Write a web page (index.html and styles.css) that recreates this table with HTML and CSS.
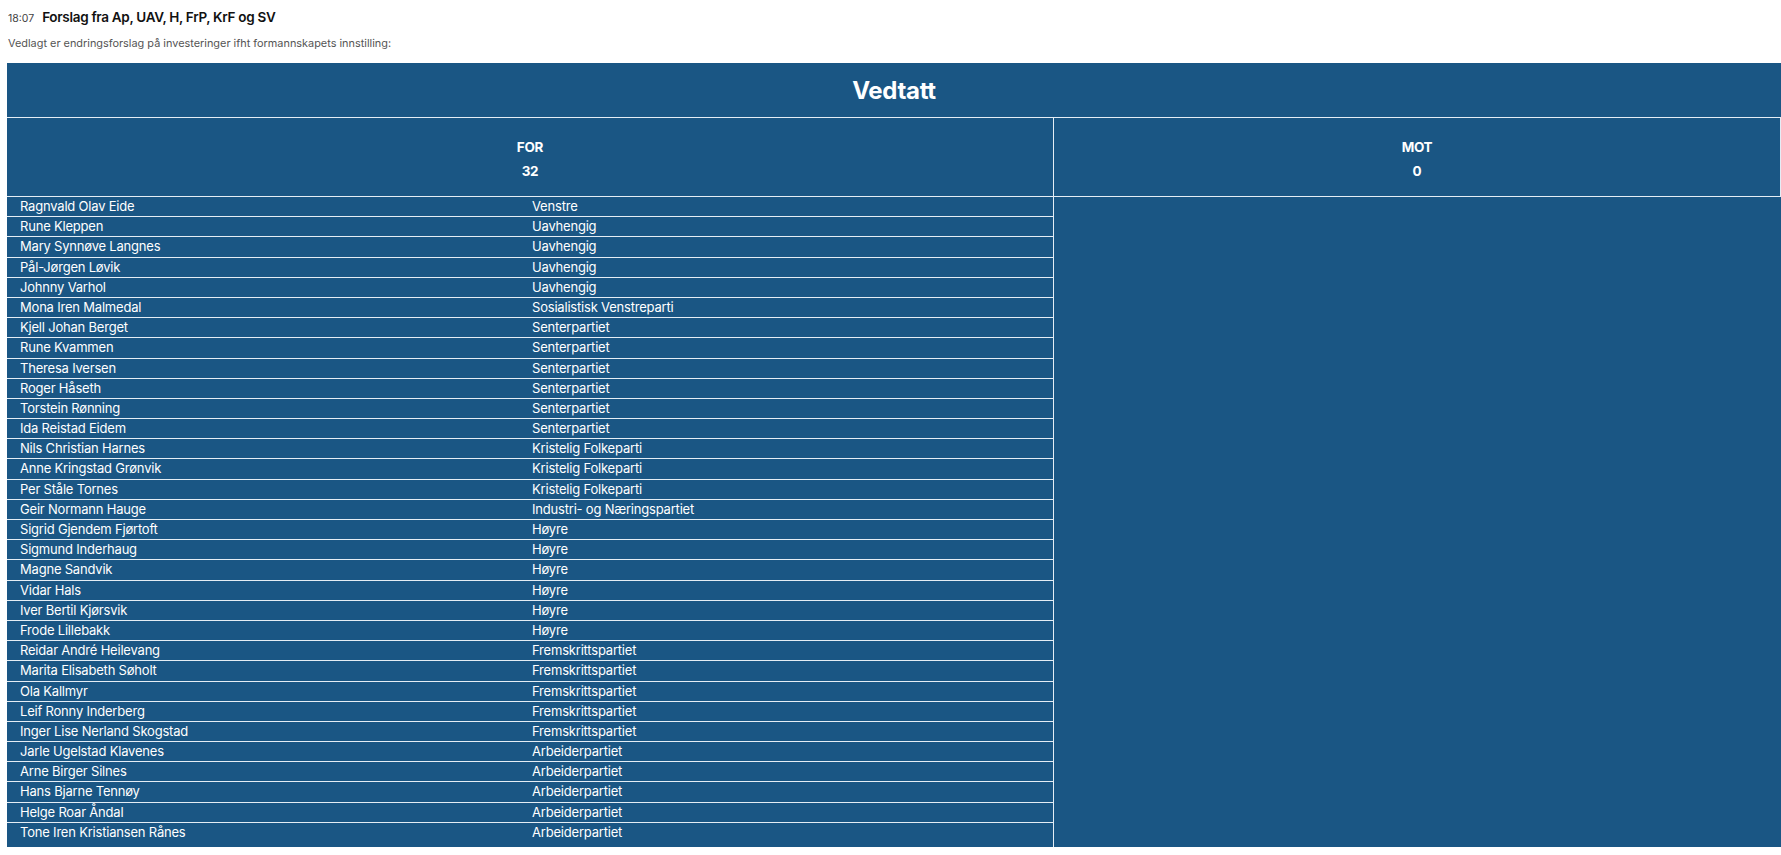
FILE: index.html
```html
<!DOCTYPE html>
<html lang="no">
<head>
<meta charset="utf-8">
<title>Votering</title>
<link rel="stylesheet" href="styles.css">
</head>
<body>
<div class="page">
  <div class="item-head">
    <span class="time">18:07</span>
    <span class="item-title">Forslag fra Ap, UAV, H, FrP, KrF og SV</span>
  </div>
  <p class="item-desc">Vedlagt er endringsforslag på investeringer ifht formannskapets innstilling:</p>

  <div class="vote">
    <div class="vote-result">Vedtatt</div>
    <div class="vote-cols">
      <div class="col col-for">
        <div class="col-head">
          <span>FOR</span>
          <span>32</span>
        </div>
        <div class="rows">
          <div class="row"><span class="name">Ragnvald Olav Eide</span><span class="party">Venstre</span></div>
          <div class="row"><span class="name">Rune Kleppen</span><span class="party">Uavhengig</span></div>
          <div class="row"><span class="name">Mary Synnøve Langnes</span><span class="party">Uavhengig</span></div>
          <div class="row"><span class="name">Pål-Jørgen Løvik</span><span class="party">Uavhengig</span></div>
          <div class="row"><span class="name">Johnny Varhol</span><span class="party">Uavhengig</span></div>
          <div class="row"><span class="name">Mona Iren Malmedal</span><span class="party">Sosialistisk Venstreparti</span></div>
          <div class="row"><span class="name">Kjell Johan Berget</span><span class="party">Senterpartiet</span></div>
          <div class="row"><span class="name">Rune Kvammen</span><span class="party">Senterpartiet</span></div>
          <div class="row"><span class="name">Theresa Iversen</span><span class="party">Senterpartiet</span></div>
          <div class="row"><span class="name">Roger Håseth</span><span class="party">Senterpartiet</span></div>
          <div class="row"><span class="name">Torstein Rønning</span><span class="party">Senterpartiet</span></div>
          <div class="row"><span class="name">Ida Reistad Eidem</span><span class="party">Senterpartiet</span></div>
          <div class="row"><span class="name">Nils Christian Harnes</span><span class="party">Kristelig Folkeparti</span></div>
          <div class="row"><span class="name">Anne Kringstad Grønvik</span><span class="party">Kristelig Folkeparti</span></div>
          <div class="row"><span class="name">Per Ståle Tornes</span><span class="party">Kristelig Folkeparti</span></div>
          <div class="row"><span class="name">Geir Normann Hauge</span><span class="party">Industri- og Næringspartiet</span></div>
          <div class="row"><span class="name">Sigrid Gjendem Fjørtoft</span><span class="party">Høyre</span></div>
          <div class="row"><span class="name">Sigmund Inderhaug</span><span class="party">Høyre</span></div>
          <div class="row"><span class="name">Magne Sandvik</span><span class="party">Høyre</span></div>
          <div class="row"><span class="name">Vidar Hals</span><span class="party">Høyre</span></div>
          <div class="row"><span class="name">Iver Bertil Kjørsvik</span><span class="party">Høyre</span></div>
          <div class="row"><span class="name">Frode Lillebakk</span><span class="party">Høyre</span></div>
          <div class="row"><span class="name">Reidar André Heilevang</span><span class="party">Fremskrittspartiet</span></div>
          <div class="row"><span class="name">Marita Elisabeth Søholt</span><span class="party">Fremskrittspartiet</span></div>
          <div class="row"><span class="name">Ola Kallmyr</span><span class="party">Fremskrittspartiet</span></div>
          <div class="row"><span class="name">Leif Ronny Inderberg</span><span class="party">Fremskrittspartiet</span></div>
          <div class="row"><span class="name">Inger Lise Nerland Skogstad</span><span class="party">Fremskrittspartiet</span></div>
          <div class="row"><span class="name">Jarle Ugelstad Klavenes</span><span class="party">Arbeiderpartiet</span></div>
          <div class="row"><span class="name">Arne Birger Silnes</span><span class="party">Arbeiderpartiet</span></div>
          <div class="row"><span class="name">Hans Bjarne Tennøy</span><span class="party">Arbeiderpartiet</span></div>
          <div class="row"><span class="name">Helge Roar Åndal</span><span class="party">Arbeiderpartiet</span></div>
          <div class="row"><span class="name">Tone Iren Kristiansen Rånes</span><span class="party">Arbeiderpartiet</span></div>
        </div>
      </div>
      <div class="col col-mot">
        <div class="col-head col-head-last">
          <span>MOT</span>
          <span>0</span>
        </div>
      </div>
    </div>
  </div>
</div>
</body>
</html>
```

FILE: styles.css
```css
html, body {
  margin: 0;
  padding: 0;
  background: #ffffff;
}

body {
  font-family: Inter, "Noto Sans", "Liberation Sans", sans-serif;
  color: #1b1b1b;
}

.page {
  padding: 9px 0 0 7px;
}

.item-head {
  display: flex;
  align-items: baseline;
  gap: 8px;
  padding-left: 1px;
  height: 18px;
}

.time {
  font-size: 10.5px;
  color: #444;
}

.item-title {
  font-size: 13.5px;
  font-weight: 600;
  color: #111;
  letter-spacing: -0.3px;
}

.item-desc {
  margin: 9px 0 0 1px;
  font-size: 10.9px;
  color: #555;
  height: 14px;
  line-height: 14px;
}

.vote {
  margin-top: 13px;
  width: 1774px;
  background: #1a5684;
  color: #ffffff;
}

.vote-result {
  height: 54px;
  display: flex;
  align-items: center;
  justify-content: center;
  font-size: 24px;
  font-weight: 700;
  letter-spacing: -0.3px;
  border-bottom: 1px solid #e4edf5;
}

.vote-cols {
  display: grid;
  grid-template-columns: 1047px 1fr;
}

.col-for {
  border-right: 1px solid #e4edf5;
}

.col-head {
  height: 79px;
  display: flex;
  flex-direction: column;
  align-items: center;
  justify-content: center;
  gap: 8px;
  font-size: 13.5px;
  font-weight: 700;
  letter-spacing: -0.3px;
  border-bottom: 1px solid #e4edf5;
  padding-top: 3px;
  box-sizing: border-box;
}

.col-head-last {
  border-right: 1px solid #e4edf5;
}

.rows {
  padding-bottom: 4px;
}

.row {
  display: grid;
  grid-template-columns: 525px 1fr;
  height: 20.2px;
  line-height: 19px;
  font-size: 13px;
  letter-spacing: -0.2px;
  border-bottom: 1px solid #e4edf5;
  box-sizing: border-box;
}

.row:last-child {
  border-bottom: none;
}

.name {
  padding-left: 13px;
}

.party {
  padding-left: 0;
}
```
